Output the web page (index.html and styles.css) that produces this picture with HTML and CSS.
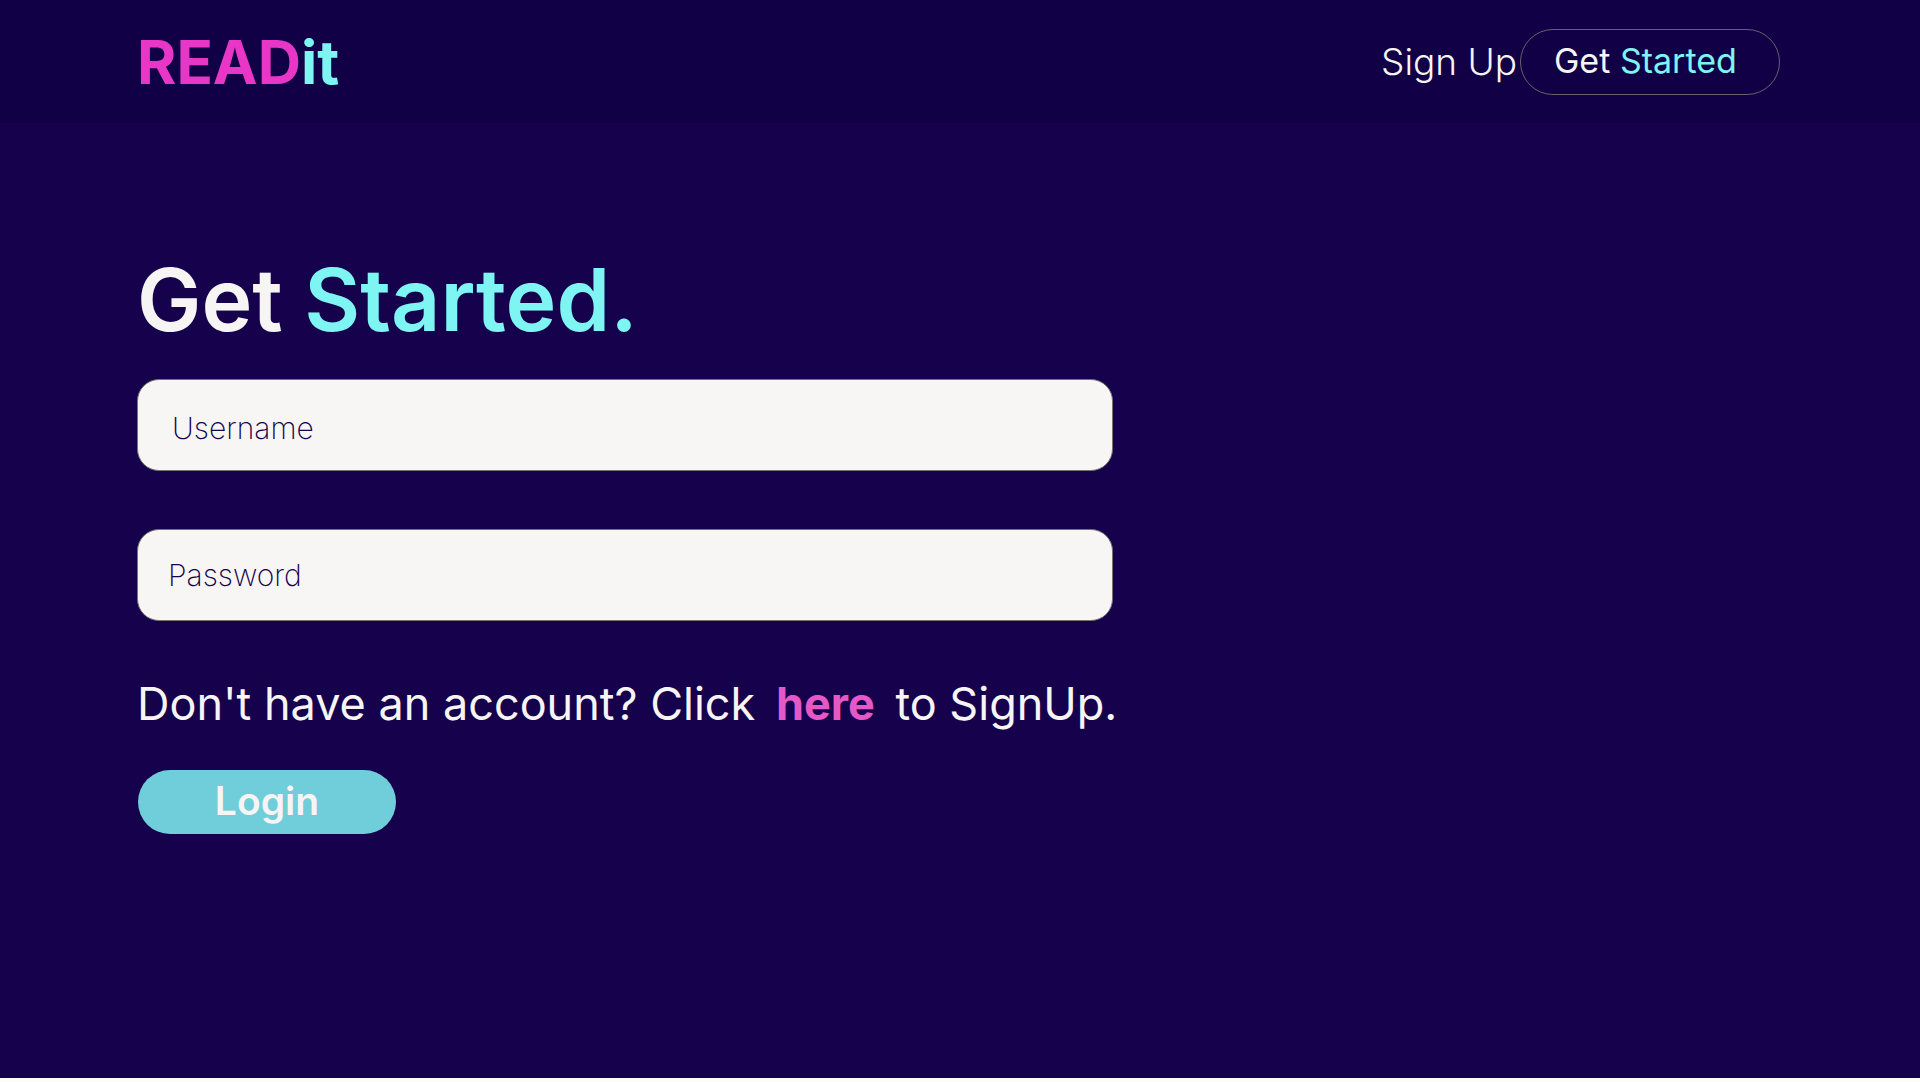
FILE: index.html
```html
<!DOCTYPE html>
<html lang="en">
<head>
<meta charset="utf-8">
<title>READit</title>
<link rel="stylesheet" href="styles.css">
</head>
<body>
<header class="topbar">
  <a class="logo" href="#"><span class="pink">READ</span><span class="aqua">it</span></a>
  <nav class="nav">
    <a class="signup" href="#">Sign Up</a>
    <a class="start" href="#">Get <span class="aqua">Started</span></a>
  </nav>
</header>
<main class="content">
  <h1 class="title">Get <span class="aqua">Started.</span></h1>
  <form class="form">
    <input class="field field-user" type="text" placeholder="Username" aria-label="Username">
    <input class="field field-pass" type="password" placeholder="Password" aria-label="Password">
    <p class="hint">Don't have an account? Click <a class="here" href="#">here</a> to SignUp.</p>
    <button class="login" type="submit">Login</button>
  </form>
</main>
</body>
</html>
```
FILE: styles.css
```css
* { box-sizing: border-box; }
html { background: #fcfcfc; }
body {
  margin: 0;
  min-height: 100vh;
  padding-bottom: 4px;
  display: flex;
  flex-direction: column;
  background: #fcfcfc;
  color: #f7f5f4;
  font-family: Inter, "Liberation Sans", sans-serif;
}
a { color: inherit; text-decoration: none; }
.pink { color: #e837c6; }
.aqua { color: #7ef4f3; }
.topbar {
  display: flex;
  justify-content: space-between;
  align-items: center;
  padding: 28px 140px 27px 137px;
  background: #120046;
}
.logo { font-size: 60px; line-height: 68px; font-weight: 700; }
.nav { display: flex; align-items: center; gap: 3px; }
.signup { font-size: 37px; line-height: 48px; font-weight: 300; }
.start {
  width: 260px;
  padding: 7px 33px 9px;
  border: 1px solid #67616c;
  border-radius: 33px;
  font-size: 34px;
  line-height: 48px;
}
.content { flex: 1; padding: 122px 137px 40px; background: #16014c; }
.title { margin: 0 0 24px; font-size: 86px; line-height: 110px; font-weight: 600; }
.form { display: flex; flex-direction: column; align-items: flex-start; }
.field {
  width: 976px;
  max-width: 100%;
  height: 92px;
  border: 1px solid #77736f;
  border-radius: 22px;
  background: #f7f6f5;
  color: #16014c;
  font: 200 30px/40px Inter, sans-serif;
}
.field::placeholder { color: #16014c; opacity: 1; }
.field-user { margin-bottom: 58px; padding: 6px 34px 0; }
.field-pass { margin-bottom: 51px; padding: 0 30px; }
.hint { margin: 0 0 34px; font-size: 45px; line-height: 64px; }
.here { margin: 0 8px; color: #e558c8; font-weight: 700; }
.login {
  width: 258px;
  height: 64px;
  margin-left: 1px;
  padding: 0 0 2px;
  border: 0;
  border-radius: 32px;
  background: #6fceda;
  color: #f7f5f4;
  font: 600 39px/48px Inter, sans-serif;
}
```
